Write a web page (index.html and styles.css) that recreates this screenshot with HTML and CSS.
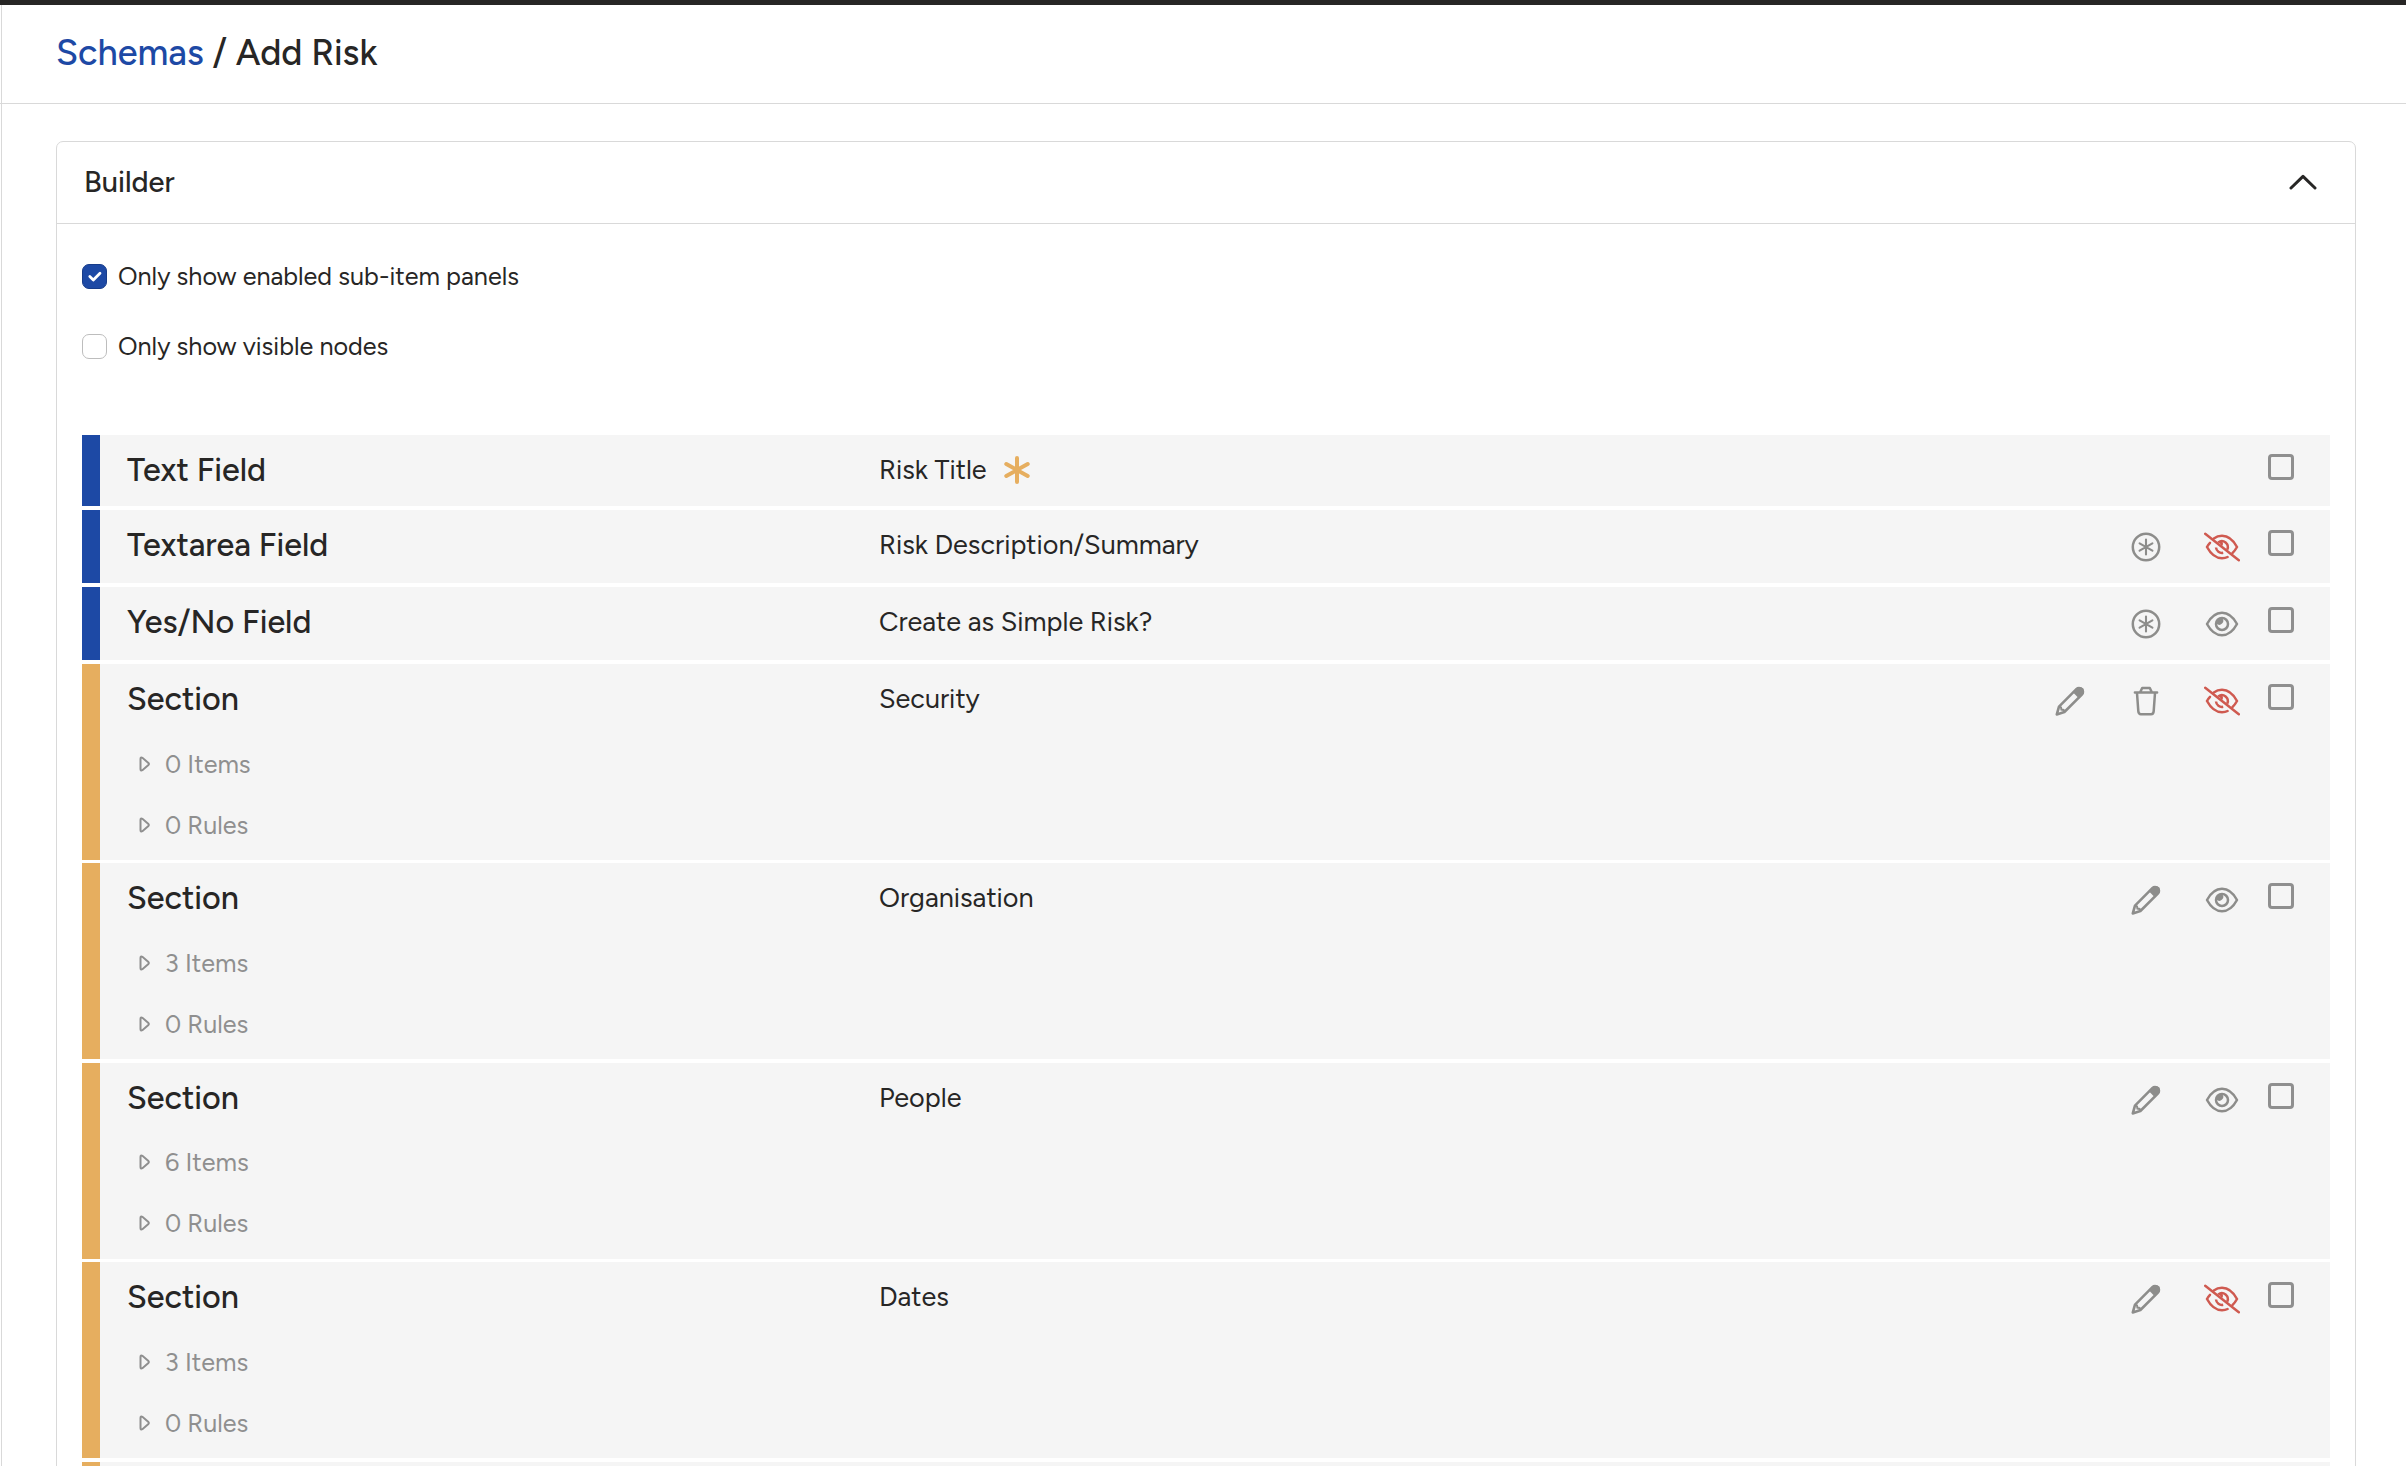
FILE: index.html
```html
<!DOCTYPE html>
<html lang="en">
<head>
  <meta charset="UTF-8">
  <meta name="viewport" content="width=device-width, initial-scale=1.0">
  <title>Schemas / Add Risk</title>
  <link rel="stylesheet" href="styles.css">
</head>
<body>
  <!-- Icons -->
  <svg class="sprite">
    <symbol id="pencil" viewBox="0 0 32 32">
      <path d="M2.8 29.4 L5 21.6 L22.4 4.2 A3.8 3.8 0 0 1 27.8 9.6 L10.4 27 Z" fill="none" stroke="currentColor" stroke-width="2.6" stroke-linejoin="round"/>
      <path d="M18.6 7 L22.4 3.2 A4.4 4.4 0 0 1 28.8 9.6 L25 13.4 Z" fill="currentColor"/>
      <path d="M5.2 21.6 L7 22.4 L7.4 24.6 L9.6 25 L10.4 27" fill="none" stroke="currentColor" stroke-width="2"/>
    </symbol>
    <symbol id="trash" viewBox="0 0 32 32">
      <path d="M4.9 7.4 H27.1 M10.3 7 L12.2 3 H19.8 L21.7 7 M7 8 L8.3 26.2 Q8.5 29.2 11 29.2 H21 Q23.5 29.2 23.7 26.2 L25 8" fill="none" stroke="currentColor" stroke-width="2.5" stroke-linecap="round" stroke-linejoin="round"/>
    </symbol>
    <symbol id="required" viewBox="0 0 32 32">
      <circle cx="16" cy="16" r="13.2" fill="none" stroke="currentColor" stroke-width="2.5"/>
      <path d="M16 8.6 V23.4 M9.6 12.3 L22.4 19.7 M22.4 12.3 L9.6 19.7" fill="none" stroke="currentColor" stroke-width="2.1" stroke-linecap="round"/>
    </symbol>
    <symbol id="eye" viewBox="0 0 36 32">
      <path d="M3 16 Q9 4.8 18 4.8 T33 16 Q27 27.2 18 27.2 T3 16 Z" fill="none" stroke="currentColor" stroke-width="2.5" stroke-linejoin="round"/>
      <circle cx="18" cy="16" r="6" fill="none" stroke="currentColor" stroke-width="2.5"/>
      <path d="M18 10 A3.6 3.6 0 0 1 12.5 15.6 A6 6 0 0 1 18 10 Z" fill="currentColor"/>
    </symbol>
    <symbol id="eye-off" viewBox="0 0 36 32">
      <path d="M9.8 7.4 Q13.5 4.8 18 4.8 Q27 4.8 33 16 Q31 19.6 28.4 22.2 M23.6 26 Q21.4 27.2 18 27.2 Q9 27.2 3 16 Q4.3 13.6 6 11.8" fill="none" stroke="currentColor" stroke-width="2.5" stroke-linecap="round"/>
      <path d="M14.2 11.4 A6 6 0 0 1 23.2 18.8 M12 16.5 A6 6 0 0 0 19.2 21.8" fill="none" stroke="currentColor" stroke-width="2.5"/>
      <path d="M15 11 Q17 9.6 18.4 10.4 Q20 13 18 15.5 Z" fill="currentColor"/>
      <path d="M1.2 2.8 L34.8 29.2" stroke="currentColor" stroke-width="2.5" stroke-linecap="round"/>
    </symbol>
    <symbol id="triangle" viewBox="0 0 12 16">
      <path d="M1.5 3 Q1.5 .8 3.4 1.8 L9.4 7 Q10.4 8 9.4 9 L3.4 14.2 Q1.5 15.2 1.5 13 Z" fill="none" stroke="currentColor" stroke-width="2"/>
    </symbol>
    <symbol id="asterisk" viewBox="0 0 28 28">
      <path d="M14 2 V26 M3.3 8 L24.7 20 M24.7 8 L3.3 20" fill="none" stroke="currentColor" stroke-width="4" stroke-linecap="round"/>
    </symbol>
  </svg>

  <div class="page">
    <header class="header">
      <h1><a href="#">Schemas</a> / Add Risk</h1>
    </header>

    <div class="card">
      <div class="card-header">
        <h2>Builder</h2>
        <svg class="chevron" viewBox="0 0 28 16"><path d="M2 14 L14 2.4 L26 14" fill="none" stroke="currentColor" stroke-width="3" stroke-linecap="round" stroke-linejoin="round"/></svg>
      </div>
      <div class="card-body">
        <div class="option">
          <span class="check checked"><svg viewBox="0 0 25 25"><path d="M7.8 12.6 L11.3 16 L18 9.2" fill="none" stroke="#fff" stroke-width="2.8" stroke-linecap="round" stroke-linejoin="round"/></svg></span>
          <span class="option-text">Only show enabled sub-item panels</span>
        </div>
        <div class="option">
          <span class="check"></span>
          <span class="option-text">Only show visible nodes</span>
        </div>
        <div class="nodes" id="nodes"></div>
      </div>
    </div>
  </div>

  <script>
    const nodes = [
      { type: 'Text Field', label: 'Risk Title', required: true, icons: [] },
      { type: 'Textarea Field', label: 'Risk Description/Summary', icons: ['required', 'eye-off'] },
      { type: 'Yes/No Field', label: 'Create as Simple Risk?', icons: ['required', 'eye'] },
      { type: 'Section', label: 'Security', items: 0, icons: ['pencil', 'trash', 'eye-off'] },
      { type: 'Section', label: 'Organisation', items: 3, icons: ['pencil', 'eye'] },
      { type: 'Section', label: 'People', items: 6, icons: ['pencil', 'eye'] },
      { type: 'Section', label: 'Dates', items: 3, icons: ['pencil', 'eye-off'] }
    ];

    function icon(name) {
      return `<svg class="icon ${name}"><use href="#${name}"></use></svg>`;
    }

    function renderNode(node) {
      const isSection = node.type === 'Section';
      const subs = isSection
        ? `<div class="sub">${icon('triangle')}<span>${node.items} Items</span></div>
           <div class="sub">${icon('triangle')}<span>0 Rules</span></div>`
        : '';
      return `<div class="node ${isSection ? 'section' : 'field'}">
        <div class="node-row">
          <div class="node-type">${node.type}</div>
          <div class="node-label">${node.label}${node.required ? icon('asterisk') : ''}</div>
          <div class="actions">${node.icons.map(icon).join('')}<span class="box"></span></div>
        </div>${subs}
      </div>`;
    }

    // empty section at the end of the list
    document.getElementById('nodes').innerHTML =
      nodes.map(renderNode).join('') + '<div class="node section"></div>';
  </script>
</body>
</html>
```
FILE: styles.css
```css
* {
  box-sizing: border-box;
}
body {
  margin: 0;
  height: 1466px;
  overflow: hidden;
  background: #fff;
  color: #272625;
  font-family: Figtree, Lato, sans-serif;
}
.sprite {
  display: none;
}
.page {
  height: 1466px;
  overflow: hidden;
  border-top: 5px solid #272625;
  background: linear-gradient(#d9d9d9, #d9d9d9) 1px 0 / 1px 100% no-repeat;
}
.header {
  height: 99px;
  padding-left: 56px;
  border-bottom: 1px solid #d9d9d9;
}
h1 {
  margin: 0;
  font-size: 36px;
  font-weight: 500;
  line-height: 96px;
}
h1 a {
  color: #1d49a5;
  text-decoration: none;
}
.card {
  width: 2300px;
  height: 1400px;
  margin: 37px 0 0 56px;
  border: 1px solid #d9d9d9;
  border-radius: 7px;
}
.card-header {
  display: flex;
  justify-content: space-between;
  align-items: center;
  height: 82px;
  padding: 0 38px 2px 27px;
  border-bottom: 1px solid #d9d9d9;
}
h2 {
  margin: 0;
  font-size: 29px;
  font-weight: 500;
}
.chevron {
  width: 28px;
  height: 16px;
}
.card-body {
  padding: 40px 25px 0;
}
.option {
  display: flex;
  align-items: center;
  gap: 11px;
  height: 25px;
  margin-bottom: 45px;
  font-size: 25.2px;
}
.option-text {
  padding-bottom: 2px;
}
.check {
  width: 25px;
  height: 25px;
  border: 1px solid #bdbdbd;
  border-radius: 7px;
}
.check svg {
  display: block;
  margin: -1px;
}
.check.checked {
  background: #1d49a5;
  border-color: #173c8a;
}
.nodes {
  padding-top: 31px;
}
.node {
  height: 73px;
  margin-bottom: 4px;
  padding-left: 27px;
  border-left: 18px solid #1d49a5;
  background: #f5f5f5;
}
.node:first-child {
  height: 71px;
}
.node:first-child .actions {
  padding-top: 19px;
}
.node.section {
  height: 196px;
  margin-bottom: 3.4px;
  border-left-color: #e6ae5f;
}
.node-row {
  display: flex;
  height: 69px;
}
.node-type {
  width: 752px;
  font-size: 32.3px;
  font-weight: 500;
  line-height: 69px;
}
.node-label {
  display: flex;
  flex: 1;
  font-size: 27px;
  line-height: 69px;
}
.actions {
  display: flex;
  padding: 20px 36px 0 0;
}
.icon {
  width: 32px;
  height: 32px;
}
.actions .icon {
  margin: 1px 44px 0 0;
  color: #8d8d8b;
}
.actions .eye,
.actions .eye-off {
  width: 36px;
  margin: 1px 28px 0 -2px;
}
.actions .eye-off {
  color: #cf5a50;
}
.box {
  width: 26px;
  height: 26px;
  border: 3px solid #8f8f8f;
  border-radius: 4px;
}
.icon.asterisk {
  width: 28px;
  height: 28px;
  margin: 21px 0 0 16px;
  color: #e6ae5f;
}
.sub {
  display: flex;
  align-items: center;
  gap: 14px;
  height: 61px;
  padding-left: 12px;
  color: #8f8f8f;
  font-size: 25.2px;
}
.icon.triangle {
  width: 12px;
  height: 16px;
}
```
